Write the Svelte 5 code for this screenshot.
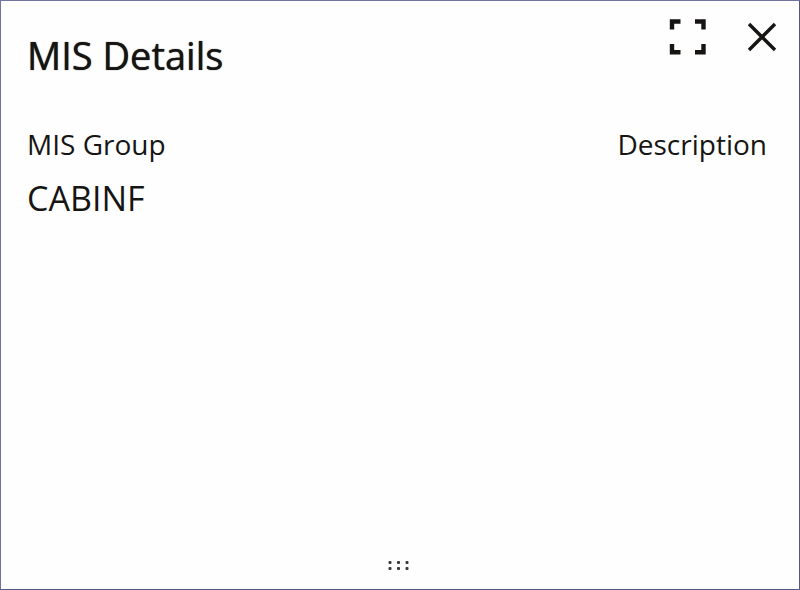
<script lang="ts">
  interface MisDetail {
    group: string;
    description: string;
  }

  let rows: MisDetail[] = $state([{ group: 'CABINF', description: '' }]);
  let open = $state(true);
  let panel: HTMLElement | undefined = $state();

  function toggleFullscreen() {
    if (document.fullscreenElement) {
      document.exitFullscreen();
    } else {
      panel?.requestFullscreen();
    }
  }
</script>

{#if open}
  <section class="panel" bind:this={panel} aria-labelledby="panel-title">
    <header class="panel-header">
      <h1 id="panel-title">MIS Details</h1>
      <div class="actions">
        <button type="button" aria-label="Expand" onclick={toggleFullscreen}>
          <svg width="40" height="40" viewBox="0 0 40 40" fill="none" stroke="#161513" stroke-width="4.4">
            <path d="M5 12.5V4.5H13.5M28 4.5H36.5V12.5M36.5 27V35.3H28M13.5 35.3H5V27" />
          </svg>
        </button>
        <button type="button" aria-label="Close" onclick={() => (open = false)}>
          <svg width="40" height="40" viewBox="0 0 40 40" fill="none" stroke="#161513" stroke-width="3.4">
            <path d="M6 7L32 33M32 7L6 33" />
          </svg>
        </button>
      </div>
    </header>

    <table>
      <thead>
        <tr>
          <th scope="col">MIS Group</th>
          <th scope="col" class="right">Description</th>
        </tr>
      </thead>
      <tbody>
        {#each rows as row}
          <tr>
            <td>{row.group}</td>
            <td class="right">{row.description}</td>
          </tr>
        {/each}
      </tbody>
    </table>

    <footer class="panel-footer">
      <button type="button" class="handle" aria-label="Move panel">
        <svg width="24" height="16" viewBox="0 0 24 16" fill="#3a3937">
          {#each [1, 9.5, 18] as x}
            <rect x={x - 0.5} y="4" width="3" height="3" rx="1" />
            <rect x={x - 0.5} y="10" width="3" height="3" rx="1" />
          {/each}
        </svg>
      </button>
    </footer>
  </section>
{/if}

<style>
  :global(body) {
    margin: 0;
    background: #fefefe;
  }

  .panel {
    display: flex;
    flex-direction: column;
    box-sizing: border-box;
    min-height: 100vh;
    border: 1px solid #6f749f;
    border-right-color: #535b83;
    border-bottom-color: #535b83;
    background: #fefefe;
    color: #161513;
    font-family: "Open Sans", "Noto Sans", sans-serif;
  }

  .panel-header {
    display: flex;
    justify-content: space-between;
    align-items: flex-start;
    padding: 16px 16px 0 26px;
  }

  h1 {
    margin: 10px 0 0;
    font-size: 38px;
    line-height: 56px;
    font-weight: 400;
    text-shadow: 0 0 1px #161513;
  }

  .actions {
    display: flex;
    gap: 36px;
  }

  button {
    display: flex;
    padding: 0;
    border: none;
    background: none;
    cursor: pointer;
  }

  table {
    width: 100%;
    margin-top: 41px;
    border-collapse: collapse;
  }

  th,
  td {
    padding: 0 32px 0 26px;
    text-align: left;
    font-weight: 400;
  }

  th {
    font-size: 28px;
    line-height: 40px;
  }

  td {
    font-size: 34px;
    line-height: 68px;
  }

  .right {
    text-align: right;
  }

  .panel-footer {
    display: flex;
    justify-content: center;
    margin-top: auto;
    padding-bottom: 16px;
  }
</style>
